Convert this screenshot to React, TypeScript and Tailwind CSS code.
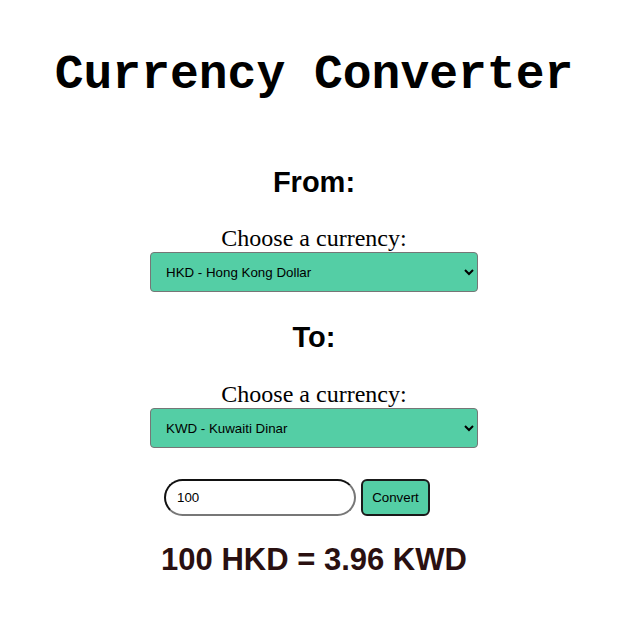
export default function App() {
  return (
    <div className="flex flex-col items-center bg-white pl-[6px] text-center min-h-[634px]">
      <h1 className="mt-[48px] font-['Courier_New','Liberation_Mono',monospace] text-[48px] font-bold leading-[54px] text-black">
        Currency Converter
      </h1>

      <h2 className="mt-[64px] font-['Liberation_Sans',Arial,sans-serif] text-[29px] font-bold leading-[32px] text-black">
        From:
      </h2>
      <label className="mt-[27px] font-['Liberation_Serif','Times_New_Roman',serif] text-[24px] leading-[26px] text-black">
        Choose a currency:
      </label>
      <select
        defaultValue="HKD"
        className="mt-[1px] w-[328px] h-[40px] rounded-[4px] border border-[#767676] bg-[#54cea5] px-[11px] font-['Liberation_Sans',Arial,sans-serif] text-[13.33px] text-black"
      >
        <option value="HKD">HKD - Hong Kong Dollar</option>
        <option value="KWD">KWD - Kuwaiti Dinar</option>
      </select>

      <h2 className="mt-[29px] font-['Liberation_Sans',Arial,sans-serif] text-[29px] font-bold leading-[32px] text-black">
        To:
      </h2>
      <label className="mt-[28px] font-['Liberation_Serif','Times_New_Roman',serif] text-[24px] leading-[26px] text-black">
        Choose a currency:
      </label>
      <select
        defaultValue="KWD"
        className="mt-[1px] w-[328px] h-[40px] rounded-[4px] border border-[#767676] bg-[#54cea5] px-[11px] font-['Liberation_Sans',Arial,sans-serif] text-[13.33px] text-black"
      >
        <option value="HKD">HKD - Hong Kong Dollar</option>
        <option value="KWD">KWD - Kuwaiti Dinar</option>
      </select>

      <div className="mt-[31px] mr-[34px] flex items-center gap-[5px]">
        <input
          type="text"
          defaultValue="100"
          className="w-[192px] h-[37px] rounded-full border-2 border-t-[#111] border-l-[#111] border-b-[#777] border-r-[#777] bg-white px-[11px] font-['Liberation_Sans',Arial,sans-serif] text-[13.33px] text-black"
        />
        <button className="w-[69px] h-[37px] rounded-[6px] border-2 border-[#1a1a1a] bg-[#54cea5] font-['Liberation_Sans',Arial,sans-serif] text-[13.33px] text-black">
          Convert
        </button>
      </div>

      <p className="mt-[26px] font-['Liberation_Sans',Arial,sans-serif] text-[31px] font-bold leading-[36px] text-[#2a1010]">
        100 HKD = 3.96 KWD
      </p>
    </div>
  );
}
